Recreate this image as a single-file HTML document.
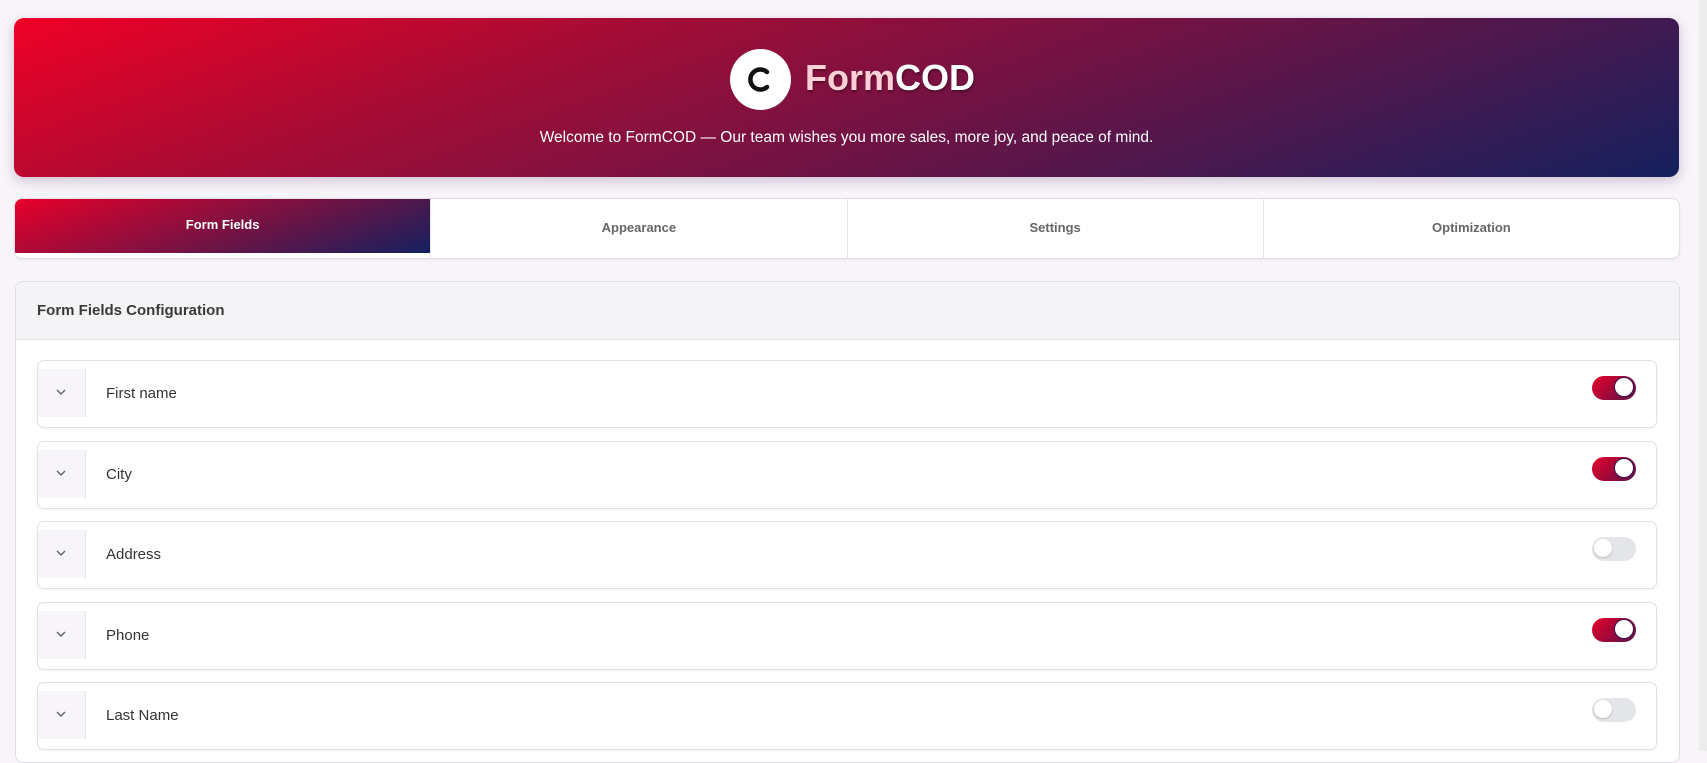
<!DOCTYPE html><html><head><style>
body{margin:0;width:1707px;height:751px;overflow:hidden;background:#f8f5fa;font-family:"Liberation Sans",sans-serif;position:relative}
.sb{position:absolute;right:0;top:0;width:8px;height:751px;background:#ececec}
.hero{position:absolute;left:14px;top:18px;width:1665px;height:159px;border-radius:10px;background:linear-gradient(160deg,#f00026 0%,#a50c35 30%,#6a1446 60%,#14205e 100%);box-shadow:0 4px 12px rgba(80,40,100,.25)}
.logo{position:absolute;left:716px;top:31px;width:61px;height:61px;border-radius:50%;background:#fff}
.title{position:absolute;left:791px;top:39px;font-size:36px;font-weight:bold;color:#ffd0d8;text-shadow:1px 2px 2px rgba(0,0,0,.35)}
.title span{color:#fff}
.sub{position:absolute;left:0;width:100%;top:111px;text-align:center;color:#fff;font-size:15.5px}
.tabs{position:absolute;left:14px;top:198px;width:1664px;height:59px;background:#fff;border:1px solid #e2dee6;border-radius:8px;display:flex;overflow:hidden;box-shadow:0 1px 3px rgba(0,0,0,.06)}
.tab{flex:1;display:flex;align-items:center;justify-content:center;font-size:13px;font-weight:bold;color:#666;border-left:1px solid #e6e6e6;margin:0;padding-bottom:3px}
.tab.a{background:linear-gradient(160deg,#e8002a,#6a1446 60%,#13205f);color:#fff;border:none;height:51px}
.card{position:absolute;left:15px;top:281px;width:1663px;height:480px;background:#fff;border:1px solid #e0dce4;border-radius:8px;overflow:hidden}
.ch{height:57px;background:#f4f4f6;border-bottom:1px solid #e2e2e6;font-size:15px;font-weight:bold;color:#3a3a3a;padding-left:21px;line-height:57px}
.row{position:absolute;left:21px;width:1618px;height:66px;border:1px solid #e2e0e6;border-radius:7px;background:#fff;box-shadow:0 1px 2px rgba(0,0,0,.05)}
.chev{position:absolute;left:0;top:8px;width:47px;height:48px;background:#f7f5f9;border-right:1px solid #e6e4e9}
.chev svg{position:absolute;left:17px;top:17px}
.lbl{position:absolute;left:68px;top:24px;font-size:15px;color:#333}
.tg{position:absolute;left:1554px;top:15px;width:44px;height:24px;border-radius:12px}
.tg.on{background:linear-gradient(135deg,#e8002a,#5a1248)}
.tg.off{background:#e4e5e9}
.tg i{position:absolute;top:2px;width:18px;height:18px;border-radius:50%;background:#fff}
.tg.on i{left:22px;border:1px solid #3a1050;top:1px}
.tg.off i{left:2px;box-shadow:0 1px 2px rgba(0,0,0,.2)}
</style></head><body>
<div class="hero">
<div class="logo"><svg width="61" height="61" viewBox="0 0 61 61"><path d="M37 23 A10 10 0 1 0 37 38" fill="none" stroke="#111" stroke-width="4.5" stroke-linecap="round"/></svg></div>
<div class="title">Form<span>COD</span></div>
<div class="sub">Welcome to FormCOD — Our team wishes you more sales, more joy, and peace of mind.</div>
</div>
<div class="tabs"><div class="tab a">Form Fields</div><div class="tab">Appearance</div><div class="tab">Settings</div><div class="tab">Optimization</div></div>
<div class="card"><div class="ch">Form Fields Configuration</div>
<div class="row" style="top:78px"><div class="chev"><svg width="12" height="12"><path d="M2 4l4 4 4-4" fill="none" stroke="#666" stroke-width="1.5"/></svg></div><div class="lbl">First name</div><div class="tg on"><i></i></div></div>
<div class="row" style="top:159px"><div class="chev"><svg width="12" height="12"><path d="M2 4l4 4 4-4" fill="none" stroke="#666" stroke-width="1.5"/></svg></div><div class="lbl">City</div><div class="tg on"><i></i></div></div>
<div class="row" style="top:239px"><div class="chev"><svg width="12" height="12"><path d="M2 4l4 4 4-4" fill="none" stroke="#666" stroke-width="1.5"/></svg></div><div class="lbl">Address</div><div class="tg off"><i></i></div></div>
<div class="row" style="top:320px"><div class="chev"><svg width="12" height="12"><path d="M2 4l4 4 4-4" fill="none" stroke="#666" stroke-width="1.5"/></svg></div><div class="lbl">Phone</div><div class="tg on"><i></i></div></div>
<div class="row" style="top:400px"><div class="chev"><svg width="12" height="12"><path d="M2 4l4 4 4-4" fill="none" stroke="#666" stroke-width="1.5"/></svg></div><div class="lbl">Last Name</div><div class="tg off"><i></i></div></div>
</div>
<div class="sb"></div>
</body></html>
